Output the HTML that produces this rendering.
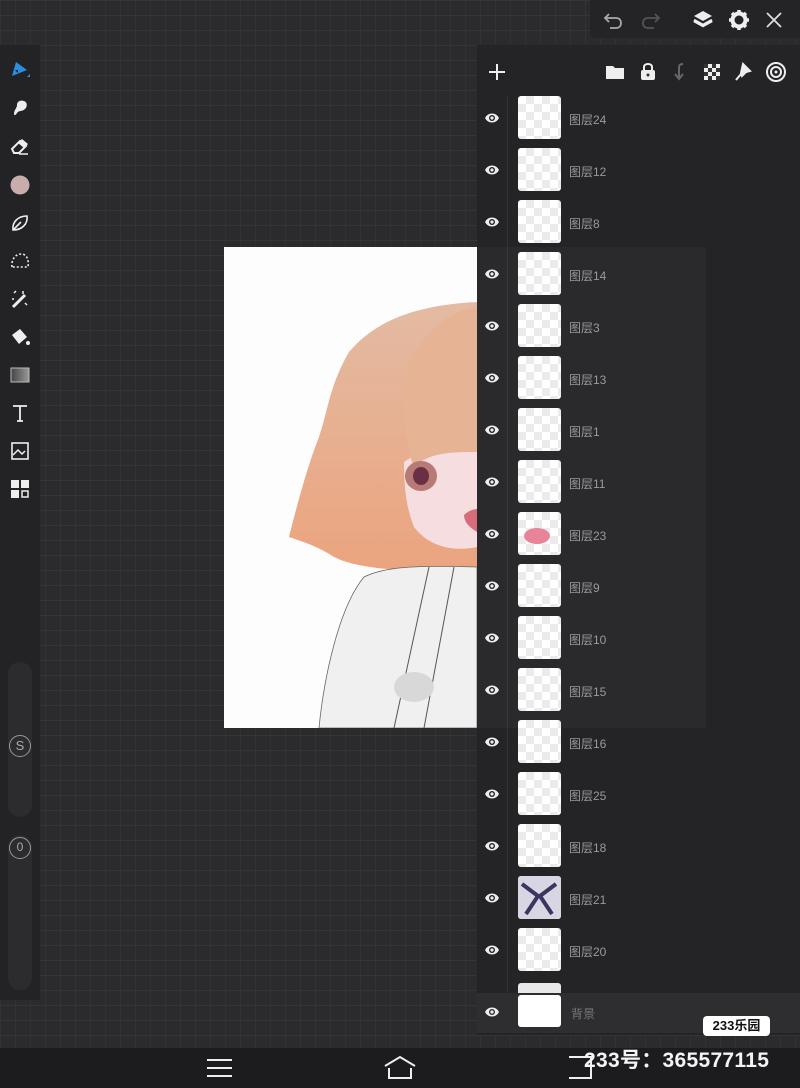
<!DOCTYPE html>
<html><head><meta charset="utf-8"><style>
*{margin:0;padding:0;box-sizing:border-box}
body{width:800px;height:1088px;overflow:hidden;position:relative;font-family:"Liberation Sans","Noto Sans CJK SC",sans-serif;
background-color:#2b2a2d;
background-image:linear-gradient(#353437 1px,transparent 1px),linear-gradient(90deg,#323134 1px,transparent 1px);
background-size:15px 15px,15px 15px;}
.abs{position:absolute}
#tb{left:0;top:45px;width:40px;height:955px;background:#232225}
#tb .i{position:absolute;left:8px;width:24px;height:24px}
#top{left:590px;top:0;width:210px;height:38px;background:#242326;border-radius:0 0 0 6px}
#panel{left:477px;top:45px;width:323px;height:990px;background:#242326}
.row{position:absolute;left:0;width:323px;height:52px}
.eye{position:absolute;left:8px;top:19px}
.th{position:absolute;left:41px;top:4px;width:43px;height:43px;border-radius:3px;
background-color:#fff;background-image:linear-gradient(45deg,#ebebeb 25%,transparent 25%,transparent 75%,#ebebeb 75%),linear-gradient(45deg,#ebebeb 25%,transparent 25%,transparent 75%,#ebebeb 75%);background-size:16px 16px;background-position:0 0,8px 8px}
.lb{position:absolute;left:92px;top:19px;font-size:12px;color:#9a999c}
#nav{left:0;top:1048px;width:800px;height:40px;background:#1c1b1e}
</style></head><body>

<!-- canvas -->
<div class="abs" style="left:224px;top:247px;width:253px;height:481px;background:#fdfdfd;overflow:hidden">
<svg width="253" height="481" viewBox="0 0 253 481">
<defs><linearGradient id="h" x1="0" y1="0" x2="0" y2="1"><stop offset="0" stop-color="#e3bba3"/><stop offset="1" stop-color="#eba47e"/></linearGradient></defs>
<path d="M253 55 C190 58 150 75 125 105 C105 140 105 160 95 190 C85 215 75 250 65 290 C80 295 95 300 110 310 C130 320 170 325 210 322 L253 320 Z" fill="url(#h)"/>
<path d="M180 215 C200 200 235 200 253 195 L253 300 C230 305 205 300 190 280 C182 260 180 240 180 215 Z" fill="#f6dde0"/>
<path d="M253 60 C215 65 190 100 180 130 C178 170 182 200 190 220 C205 205 230 205 253 205 Z" fill="#e6b395"/>
<ellipse cx="197" cy="229" rx="16" ry="15" fill="#b87a74"/>
<ellipse cx="197" cy="229" rx="8" ry="9" fill="#6b2f45"/>
<path d="M240 268 C246 262 253 262 253 262 L253 285 C245 280 240 275 240 268 Z" fill="#d86d7a"/>
<path d="M140 330 C160 320 190 318 253 320 L253 481 L95 481 C100 430 115 360 140 330 Z" fill="#f1f0f1" stroke="#666" stroke-width="0.8"/>
<path d="M205 320 L170 481 M230 320 L200 481" stroke="#555" stroke-width="1" fill="none"/>
<ellipse cx="190" cy="440" rx="20" ry="15" fill="#d9d8d9"/>
</svg></div>

<!-- left toolbar -->
<div id="tb" class="abs">
<svg class="i" style="top:12px" viewBox="0 0 24 24"><path d="M4 19 L8 5 L19 13 Z" fill="#2b8fe0"/><path d="M7 13 L10 13 L10 16Z" fill="#1a1a1a"/><path d="M19 20 L22 20 L22 17Z" fill="#2b8fe0"/></svg>
<svg class="i" style="top:51px" viewBox="0 0 24 24"><path d="M6 18 C6 14 9 12 9 9 C9 5 13 4 16 5 C19 6 20 10 17 13 C14 16 11 14 9 17 C8 19 6 20 6 18Z" fill="#eee"/></svg>
<svg class="i" style="top:89px" viewBox="0 0 24 24"><path d="M4 15 L12 7 L18 12 L11 19 L6 19 Z" fill="none" stroke="#eee" stroke-width="2"/><path d="M10 9 L14 5 L20 10 L16 14Z" fill="#eee"/><path d="M11 20 L20 20" stroke="#eee" stroke-width="1.5"/></svg>
<svg class="i" style="top:128px" viewBox="0 0 24 24"><circle cx="12" cy="12" r="9.5" fill="#c9adad"/></svg>
<svg class="i" style="top:166px" viewBox="0 0 24 24"><path d="M5 19 C4 11 10 5 19 5 C20 13 14 19 5 19Z M5 19 L13 11" fill="none" stroke="#eee" stroke-width="1.6"/></svg>
<svg class="i" style="top:204px" viewBox="0 0 24 24"><path d="M4 18 C3 10 8 5 13 5 C19 5 21 11 20 18 Z" fill="none" stroke="#eee" stroke-width="1.6" stroke-dasharray="2 2"/></svg>
<svg class="i" style="top:242px" viewBox="0 0 24 24"><path d="M5 20 L17 8" stroke="#eee" stroke-width="3"/><path d="M6 6 L8 4 M17 16 L19 18 M15 4 L15 7 M4 12 L6 12" stroke="#eee" stroke-width="1.5"/></svg>
<svg class="i" style="top:280px" viewBox="0 0 24 24"><path d="M4 10 L12 4 L19 12 L11 19 Z" fill="#eee"/><circle cx="20" cy="18" r="2" fill="#eee"/></svg>
<svg class="i" style="top:318px" viewBox="0 0 24 24"><defs><linearGradient id="g" x1="0" x2="1"><stop offset="0" stop-color="#444"/><stop offset="1" stop-color="#999"/></linearGradient></defs><rect x="3" y="5" width="18" height="14" fill="url(#g)" stroke="#bbb"/></svg>
<svg class="i" style="top:356px" viewBox="0 0 24 24"><path d="M5 5 L19 5 M12 5 L12 20 M9 20 L15 20" stroke="#eee" stroke-width="1.8" fill="none"/></svg>
<svg class="i" style="top:394px" viewBox="0 0 24 24"><rect x="4" y="4" width="16" height="16" fill="none" stroke="#eee" stroke-width="1.6"/><path d="M5 16 L10 11 L14 15 L17 12" stroke="#eee" stroke-width="1.5" fill="none"/></svg>
<svg class="i" style="top:432px" viewBox="0 0 24 24"><rect x="3" y="3" width="8" height="8" fill="#eee"/><rect x="13" y="3" width="8" height="8" fill="#eee"/><rect x="3" y="13" width="8" height="8" fill="#eee"/><rect x="14" y="14" width="6" height="6" fill="none" stroke="#eee" stroke-width="1.5"/></svg>
<div class="abs" style="left:8px;top:617px;width:24px;height:155px;border-radius:12px;background:#2c2b2e"></div>
<div class="abs" style="left:8px;top:790px;width:24px;height:155px;border-radius:12px;background:#2c2b2e"></div>
<div class="abs" style="left:9px;top:690px;width:22px;height:22px;border-radius:50%;border:1.5px solid #999;color:#aaa;font-size:13px;text-align:center;line-height:19px">S</div>
<div class="abs" style="left:9px;top:792px;width:22px;height:22px;border-radius:50%;border:1.5px solid #999;color:#aaa;font-size:12px;text-align:center;line-height:19px">0</div>
</div>

<!-- top bar -->
<div id="top" class="abs">
<svg class="abs" style="left:12px;top:9px" width="22" height="22" viewBox="0 0 22 22"><path d="M7 5 L3 9 L7 13 M3 9 L14 9 C18 9 19 12 19 14 C19 17 17 19 14 19 L8 19" stroke="#aaa" stroke-width="1.8" fill="none"/></svg>
<svg class="abs" style="left:50px;top:9px" width="22" height="22" viewBox="0 0 22 22"><path d="M15 5 L19 9 L15 13 M19 9 L8 9 C4 9 3 12 3 14 C3 17 5 19 8 19 L14 19" stroke="#555" stroke-width="1.8" fill="none"/></svg>
<svg class="abs" style="left:101px;top:8px" width="24" height="24" viewBox="0 0 24 24"><path d="M12 3 L21 8 L12 13 L3 8Z" fill="#eee"/><path d="M3 13 L12 18 L21 13 M3 12 L12 17 L21 12" stroke="#eee" stroke-width="2.5" fill="none"/></svg>
<svg class="abs" style="left:137px;top:8px" width="24" height="24" viewBox="0 0 24 24"><circle cx="12" cy="12" r="6.5" fill="none" stroke="#eee" stroke-width="4"/><path d="M12 2 V6 M12 18 V22 M2 12 H6 M18 12 H22 M5 5 L8 8 M16 16 L19 19 M5 19 L8 16 M16 8 L19 5" stroke="#eee" stroke-width="3.5"/></svg>
<svg class="abs" style="left:175px;top:11px" width="18" height="18" viewBox="0 0 18 18"><path d="M2 2 L16 16 M16 2 L2 16" stroke="#ddd" stroke-width="1.8"/></svg>
</div>

<!-- layer panel -->
<div id="panel" class="abs">
<svg class="abs" style="left:11px;top:18px" width="18" height="18" viewBox="0 0 18 18"><path d="M9 1 V17 M1 9 H17" stroke="#eee" stroke-width="2"/></svg>
<svg class="abs" style="left:128px;top:18px" width="20" height="18" viewBox="0 0 20 18"><path d="M1 3 H8 L10 5 H19 V16 H1Z" fill="#eee"/></svg>
<svg class="abs" style="left:162px;top:17px" width="18" height="20" viewBox="0 0 18 20"><path d="M5 8 V5 C5 1 13 1 13 5 V8" stroke="#eee" stroke-width="2" fill="none"/><rect x="2" y="8" width="14" height="10" rx="2" fill="#eee"/><circle cx="9" cy="13" r="1.5" fill="#333"/></svg>
<svg class="abs" style="left:195px;top:17px" width="16" height="20" viewBox="0 0 16 20"><path d="M11 2 C7 2 7 4 7 7 V16 M3 12 L7 17 L11 12" stroke="#666" stroke-width="2" fill="none"/></svg>
<svg class="abs" style="left:226px;top:18px" width="18" height="18" viewBox="0 0 18 18"><rect x="1" y="1" width="16" height="16" fill="#eee"/><path d="M1 1h4v4H1zM9 1h4v4H9zM5 5h4v4H5zM13 5h4v4h-4zM1 9h4v4H1zM9 9h4v4H9zM5 13h4v4H5zM13 13h4v4h-4z" fill="#333"/></svg>
<svg class="abs" style="left:257px;top:17px" width="18" height="20" viewBox="0 0 18 20"><path d="M9 2 L16 9 L12 10 L8 14 L7 11 Z M7 12 L2 18" stroke="#eee" stroke-width="2" fill="#eee"/></svg>
<svg class="abs" style="left:288px;top:16px" width="22" height="22" viewBox="0 0 22 22"><circle cx="11" cy="11" r="9" fill="none" stroke="#eee" stroke-width="2"/><circle cx="11" cy="11" r="5" fill="none" stroke="#eee" stroke-width="2"/><circle cx="11" cy="11" r="1.5" fill="#eee"/></svg>
<div class="abs" style="left:30px;top:50px;width:1px;height:900px;background:#333"></div>
<div class="abs" style="left:0;top:202px;width:229px;height:481px;background:rgba(255,255,255,0.03)"></div>
<div id="rows"></div>
<div class="abs" style="left:41px;top:938px;width:43px;height:12px;background:#e8e8e8;border-radius:3px 3px 0 0"></div>
<div class="row" style="top:948px;height:40px;background:#2e2d30">
<svg class="eye" style="top:12px" width="14" height="14" viewBox="0 0 14 14"><path d="M0 7 C3 1 11 1 14 7 C11 13 3 13 0 7Z" fill="#eee"/><circle cx="7" cy="7" r="3" fill="#2e2d30"/><circle cx="7" cy="7" r="1.6" fill="#eee"/></svg>
<div class="th" style="top:2px;background:#fff;height:32px"></div>
<div class="lb" style="top:12px;left:94px;color:#777">背景</div>
</div>
</div>

<div class="abs" style="left:703px;top:1016px;width:67px;height:20px;background:#fff;border-radius:4px;color:#111;font-weight:bold;font-size:13px;text-align:center;line-height:20px">233乐园</div>

<div id="nav" class="abs">
<svg class="abs" style="left:207px;top:10px" width="25" height="20" viewBox="0 0 25 20"><path d="M0 2H25M0 10H25M0 18H25" stroke="#eee" stroke-width="2"/></svg>
<svg class="abs" style="left:383px;top:6px" width="34" height="26" viewBox="0 0 34 26"><path d="M2 12 L17 3 L32 12 M6 14 V24 H28 V14" stroke="#eee" stroke-width="2" fill="none"/></svg>
<svg class="abs" style="left:567px;top:6px" width="28" height="26" viewBox="0 0 28 26"><path d="M2 3 H24 V24 H2" stroke="#eee" stroke-width="2" fill="none"/></svg>
<div class="abs" style="left:584px;top:-4px;font-size:21px;font-weight:bold;color:#f4f4f4;letter-spacing:0.3px">233号：365577115</div>
</div>

<script>
var names=["24","12","8","14","3","13","1","11","23","9","10","15","16","25","18","21","20"];
var h="";
var eye='<svg class="eye" width="14" height="14" viewBox="0 0 14 14"><path d="M0 7 C3 1 11 1 14 7 C11 13 3 13 0 7Z" fill="#eee"/><circle cx="7" cy="7" r="3" fill="#242326"/><circle cx="7" cy="7" r="1.6" fill="#eee"/></svg>';
names.forEach(function(n,i){
 var extra="";
 if(n=="23") extra='<div style="position:absolute;left:6px;top:16px;width:26px;height:16px;border-radius:50%;background:#e9839a"></div>';
 if(n=="21") extra='<div style="position:absolute;left:0;top:0;width:43px;height:43px;background:#d9d6e4"><svg width="43" height="43"><path d="M4 8 L20 20 L8 38 M38 8 L22 20 L34 38" stroke="#3b3560" stroke-width="4" fill="none"/></svg></div>';
 h+='<div class="row" style="top:'+(47+i*52)+'px">'+eye+'<div class="th" style="overflow:hidden">'+extra+'</div><div class="lb">图层'+n+'</div></div>';
});
document.getElementById("rows").innerHTML=h;
</script>
</body></html>
